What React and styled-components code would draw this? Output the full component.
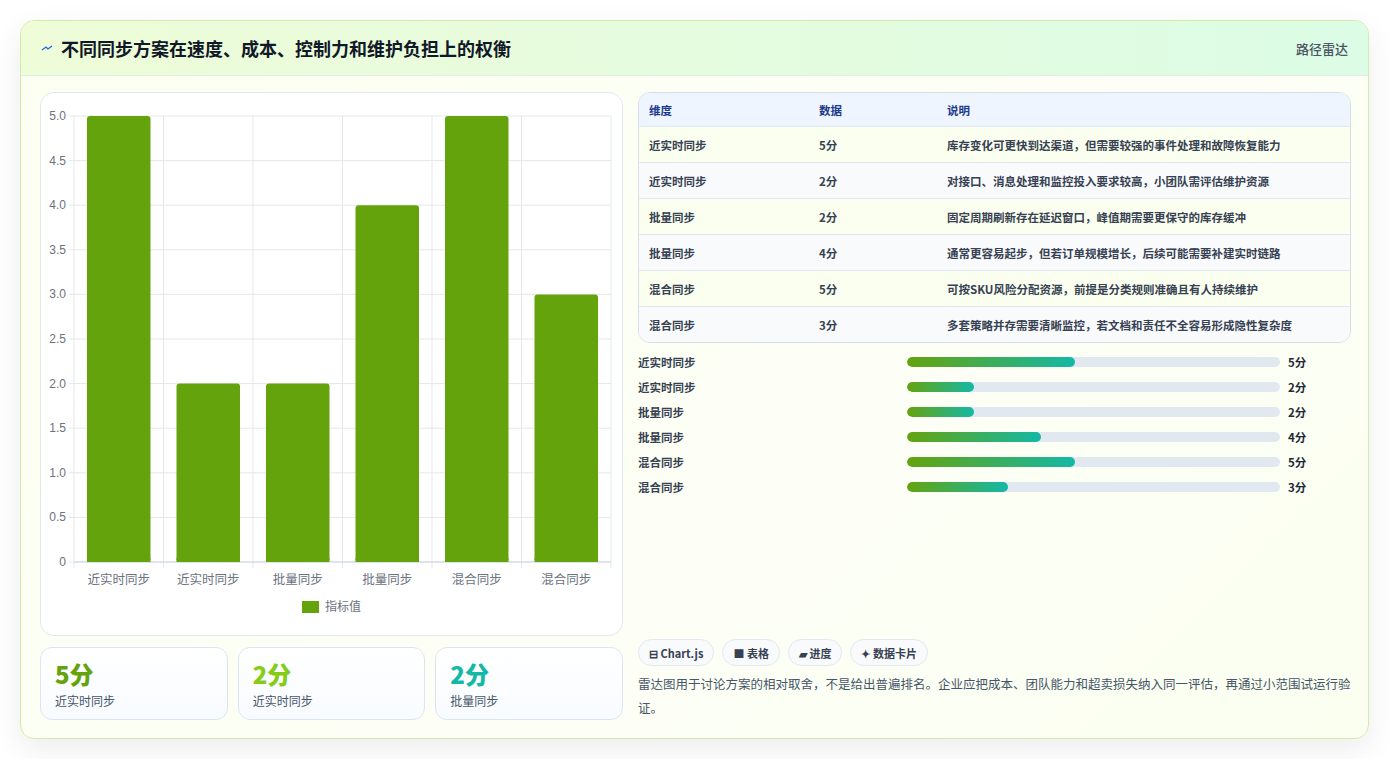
import React from "react";
import styled, { createGlobalStyle } from "styled-components";

const G = createGlobalStyle`
  body{margin:0;background:#fff;font-family:"Noto Sans CJK SC","Noto Sans",sans-serif;}
`;
const Page = styled.div`padding:20px 20px 20px 20px;`;
const Card = styled.div`
  width:1349px;height:719px;box-sizing:border-box;border:1px solid #d2eba8;border-radius:14px;
  background:linear-gradient(135deg,#fbfff0,#fdfff6 60%,#fafff0);overflow:hidden;
  box-shadow:0 10px 30px rgba(0,0,0,0.08);display:flex;flex-direction:column;
`;
const Header = styled.div`
  height:56px;box-sizing:border-box;display:flex;align-items:center;justify-content:space-between;
  padding:0 20px;background:linear-gradient(90deg,#eefcd8,#dcfce5);border-bottom:1px solid #dfeee0;
`;
const Title = styled.h1`margin:0;font-size:18px;font-weight:700;color:#111827;display:flex;align-items:center;gap:8px;`;
const Tag = styled.span`font-size:13px;color:#4b5563;font-weight:500;`;
const Body = styled.div`flex:1;display:grid;grid-template-columns:583px 713px;gap:15px;padding:16px 19px 18px 19px;`;
const Col = styled.div`display:flex;flex-direction:column;gap:11px;min-height:0;`;
const ChartBox = styled.div`height:544px;box-sizing:border-box;background:#fff;border:1px solid #e2e8f0;border-radius:14px;`;
const Stats = styled.div`display:grid;grid-template-columns:repeat(3,1fr);gap:10px;`;
const Stat = styled.div`height:73px;box-sizing:border-box;border:1px solid #dbe5f1;border-radius:12px;background:linear-gradient(180deg,#fff,#f8fbff);padding:10px 14px;`;
const StatVal = styled.div`font-size:24px;font-weight:800;line-height:32px;color:${p=>p.c};`;
const StatLab = styled.div`font-size:12px;color:#475569;margin-top:2px;`;
const Table = styled.div`border:1px solid #d6dee9;border-radius:12px;overflow:hidden;background:#fff;`;
const Row = styled.div`display:grid;grid-template-columns:170px 128px 1fr;height:${p=>p.h}px;align-items:center;padding-left:10px;
  font-size:11.5px;font-weight:${p=>p.head?700:600};color:${p=>p.head?"#1e3a8a":"#374151"};
  background:${p=>p.head?"#eef5ff":p.odd?"#fafff0":"#f8fafc"};border-top:${p=>p.first?"none":"1px solid #e2e8f0"};`;
const Bars = styled.div`display:flex;flex-direction:column;margin-top:-1px;`;
const BarRow = styled.div`display:grid;grid-template-columns:269px 373px auto;align-items:center;height:25px;font-size:11.5px;color:#374151;font-weight:600;`;
const Track = styled.div`height:10px;border-radius:5px;background:#e2e8f0;overflow:hidden;`;
const Fill = styled.div`height:100%;border-radius:5px;background:linear-gradient(90deg,#65a30d,#14b8a6);`;
const Val = styled.span`padding-left:8px;font-weight:700;color:#1f2937;`;
const Spacer = styled.div`flex:1;`;
const Chips = styled.div`display:flex;gap:8px;`;
const Chip = styled.span`height:27px;box-sizing:border-box;padding:0 10px;border:1px solid #e2e8f0;border-radius:14px;background:#f8fafc;
  display:flex;align-items:center;font-size:11px;font-weight:700;color:#374151;`;
const Note = styled.p`margin:6px 0 0;font-size:12.5px;line-height:24px;color:#475569;`;

const cats=["近实时同步","近实时同步","批量同步","批量同步","混合同步","混合同步"];
const vals=[5,2,2,4,5,3];
const desc=["库存变化可更快到达渠道，但需要较强的事件处理和故障恢复能力","对接口、消息处理和监控投入要求较高，小团队需评估维护资源","固定周期刷新存在延迟窗口，峰值期需要更保守的库存缓冲","通常更容易起步，但若订单规模增长，后续可能需要补建实时链路","可按SKU风险分配资源，前提是分类规则准确且有人持续维护","多套策略并存需要清晰监控，若文档和责任不全容易形成隐性复杂度"];

function Chart(){
  const x0=33,x1=570,y0=23,y1=469,w=(x1-x0)/6;
  const ticks=[0,0.5,1,1.5,2,2.5,3,3.5,4,4.5,5];
  const y=v=>y1-(v/5)*(y1-y0);
  return <svg width="581" height="542" style={{display:"block"}}>
    {ticks.map(t=><g key={t}><line x1={x0-5} x2={x1} y1={y(t)} y2={y(t)} stroke="#e5e7eb"/>
      <text x={x0-8} y={y(t)+4} fontSize="12" textAnchor="end" fill="#6b7280" fontFamily="Liberation Sans">{t===0?"0":t.toFixed(1)}</text></g>)}
    {[0,1,2,3,4,5,6].map(i=><line key={i} x1={x0+i*w} x2={x0+i*w} y1={y0} y2={y1+6} stroke="#e5e7eb"/>)}
    <line x1={x0} x2={x1} y1={y1} y2={y1} stroke="#cbd5e1"/>
    {vals.map((v,i)=><g key={i}><rect x={x0+i*w+13} y={y(v)} width={w-26} height={y1-y(v)} rx="3" fill="#65a30d"/>
      <path d={`M${x0+i*w+13} ${y1-4}h${w-26}v4h-${w-26}z`} fill="#65a30d"/>
      <text x={x0+i*w+w/2} y={y1+22} fontSize="12.5" textAnchor="middle" fill="#6b7280">{cats[i]}</text></g>)}
    <rect x="261" y="508" width="17" height="12" fill="#65a30d"/>
    <text x="284" y="518" fontSize="12" fill="#6b7280">指标值</text>
  </svg>;
}

export default function App(){
  return <Page><G/><Card>
    <Header><Title><svg width="12" height="12" viewBox="0 0 12 12"><path d="M1 8l4-3 2 2 4-3" stroke="#2563eb" strokeWidth="1.3" fill="none"/></svg>不同同步方案在速度、成本、控制力和维护负担上的权衡</Title><Tag>路径雷达</Tag></Header>
    <Body>
      <Col>
        <ChartBox><Chart/></ChartBox>
        <Stats>
          <Stat><StatVal c="#65a30d">5分</StatVal><StatLab>近实时同步</StatLab></Stat>
          <Stat><StatVal c="#84cc16">2分</StatVal><StatLab>近实时同步</StatLab></Stat>
          <Stat><StatVal c="#14b8a6">2分</StatVal><StatLab>批量同步</StatLab></Stat>
        </Stats>
      </Col>
      <Col style={{gap:0}}>
        <Table>
          <Row head first h={33}><span>维度</span><span>数据</span><span>说明</span></Row>
          {vals.map((v,i)=><Row key={i} odd={i%2===0} h={35}><span>{cats[i]}</span><span>{v}分</span><span>{desc[i]}</span></Row>)}
        </Table>
        <Bars style={{marginTop:6}}>
          {vals.map((v,i)=><BarRow key={i}><span>{cats[i]}</span><Track><Fill style={{width:`${v*9}%`}}/></Track><Val>{v}分</Val></BarRow>)}
        </Bars>
        <Spacer/>
        <Chips><Chip>⊟ Chart.js</Chip><Chip>■ 表格</Chip><Chip>▰ 进度</Chip><Chip>✦ 数据卡片</Chip></Chips>
        <Note>雷达图用于讨论方案的相对取舍，不是给出普遍排名。企业应把成本、团队能力和超卖损失纳入同一评估，再通过小范围试运行验证。</Note>
      </Col>
    </Body>
  </Card></Page>;
}
